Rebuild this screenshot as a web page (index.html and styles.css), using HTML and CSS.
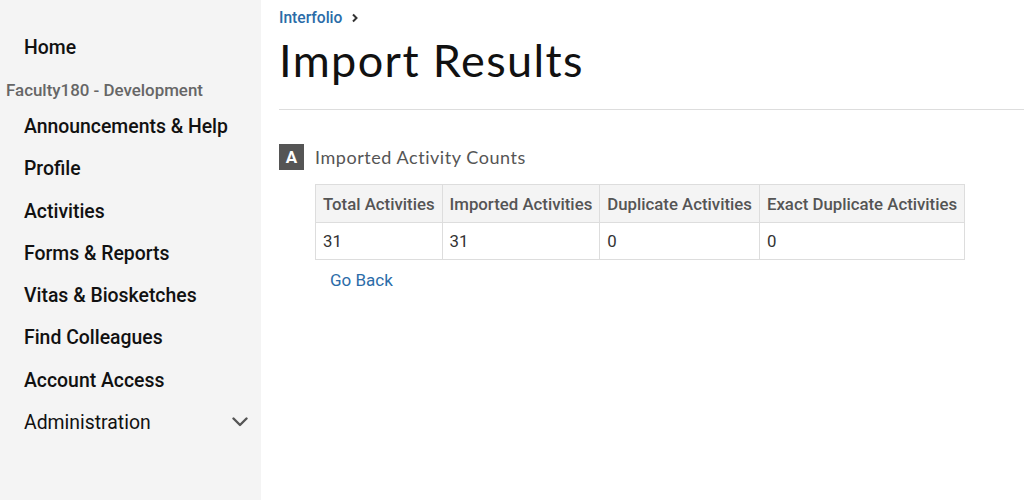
FILE: index.html
```html
<!DOCTYPE html>
<html lang="en">
<head>
<meta charset="utf-8">
<title>Import Results</title>
<link rel="stylesheet" href="styles.css">
</head>
<body>
<div class="layout">
  <nav class="sidebar">
    <a class="nav-item" href="#">Home</a>
    <div class="nav-group">Faculty180 - Development</div>
    <a class="nav-item" href="#">Announcements &amp; Help</a>
    <a class="nav-item" href="#">Profile</a>
    <a class="nav-item" href="#">Activities</a>
    <a class="nav-item" href="#">Forms &amp; Reports</a>
    <a class="nav-item" href="#">Vitas &amp; Biosketches</a>
    <a class="nav-item" href="#">Find Colleagues</a>
    <a class="nav-item" href="#">Account Access</a>
    <a class="nav-item nav-expand" href="#">
      <span>Administration</span>
      <svg class="chevron" width="16" height="10" viewBox="0 0 16 10"><path d="M1.5 1.5 L8 8 L14.5 1.5" fill="none" stroke="#555" stroke-width="2.4" stroke-linecap="round" stroke-linejoin="round"/></svg>
    </a>
  </nav>
  <main class="main">
    <div class="breadcrumb">
      <a href="#" class="crumb">Interfolio</a>
      <svg class="crumb-sep" width="8" height="10" viewBox="0 0 8 10"><path d="M2 1.5 L5.5 5 L2 8.5" fill="none" stroke="#333" stroke-width="2"/></svg>
    </div>
    <h1 class="title">Import Results</h1>
    <hr class="rule">
    <section class="section">
      <div class="section-head">
        <span class="badge">A</span>
        <h2 class="section-title">Imported Activity Counts</h2>
      </div>
      <div class="section-body">
        <table class="counts">
          <thead>
            <tr><th>Total Activities</th><th>Imported Activities</th><th>Duplicate Activities</th><th>Exact Duplicate Activities</th></tr>
          </thead>
          <tbody>
            <tr><td>31</td><td>31</td><td>0</td><td>0</td></tr>
          </tbody>
        </table>
        <a href="#" class="back">Go Back</a>
      </div>
    </section>
  </main>
</div>
</body>
</html>
```
FILE: styles.css
```css
html, body {
  margin: 0;
  padding: 0;
  background: #fff;
}
body {
  font-family: Roboto, "Liberation Sans", sans-serif;
  color: #222;
}
.layout {
  display: flex;
  min-height: 500px;
}
.sidebar {
  width: 261px;
  flex: 0 0 261px;
  background: #f4f4f4;
  padding-top: 26px;
  display: flex;
  flex-direction: column;
}
.nav-item {
  display: flex;
  align-items: center;
  justify-content: space-between;
  height: 42.3px;
  padding: 0 13px 0 24px;
  font-size: 19.4px;
  font-weight: 500;
  color: #111;
  text-decoration: none;
}
.nav-expand {
  font-weight: 400;
}
.chevron {
  display: block;
  margin-top: -2px;
}
.nav-group {
  padding: 10px 0 3px 6px;
  line-height: 24px;
  font-size: 16.9px;
  font-weight: 500;
  color: #666;
}
.main {
  flex: 1;
  padding-left: 18px;
}
.breadcrumb {
  display: flex;
  align-items: center;
  gap: 9px;
  height: 20px;
  margin-top: 8px;
}
.crumb {
  font-size: 15.6px;
  font-weight: 500;
  color: #2b6ca8;
  text-decoration: none;
}
.crumb-sep {
  display: block;
}
.title {
  margin: 5px 0 0 0;
  font-family: Lato, "Open Sans", sans-serif;
  font-weight: 400;
  font-size: 45px;
  line-height: 54px;
  letter-spacing: 1.4px;
  color: #111;
}
.rule {
  border: 0;
  border-top: 1px solid #ddd;
  margin: 22px 0 0 0;
}
.section {
  padding-top: 34px;
}
.section-head {
  display: flex;
  align-items: center;
  gap: 11px;
}
.badge {
  width: 25px;
  height: 26px;
  background: #555;
  color: #fff;
  font-weight: 700;
  font-size: 17px;
  display: flex;
  align-items: center;
  justify-content: center;
}
.section-title {
  margin: 0;
  font-family: Lato, "Open Sans", sans-serif;
  font-weight: 400;
  font-size: 18px;
  letter-spacing: 0.55px;
  color: #555;
}
.section-body {
  padding-left: 36px;
  padding-top: 14px;
}
.counts {
  border-collapse: collapse;
  font-size: 16.8px;
}
.counts th, .counts td {
  border: 1px solid #ddd;
  padding: 0 7px;
  text-align: left;
  white-space: nowrap;
}
.counts th {
  background: #f4f4f4;
  font-weight: 500;
  color: #555;
  height: 37px;
}
.counts td {
  color: #333;
  height: 36px;
}
.back {
  display: inline-block;
  margin: 10px 0 0 15px;
  font-size: 17px;
  color: #2b6ca8;
  text-decoration: none;
}
```
